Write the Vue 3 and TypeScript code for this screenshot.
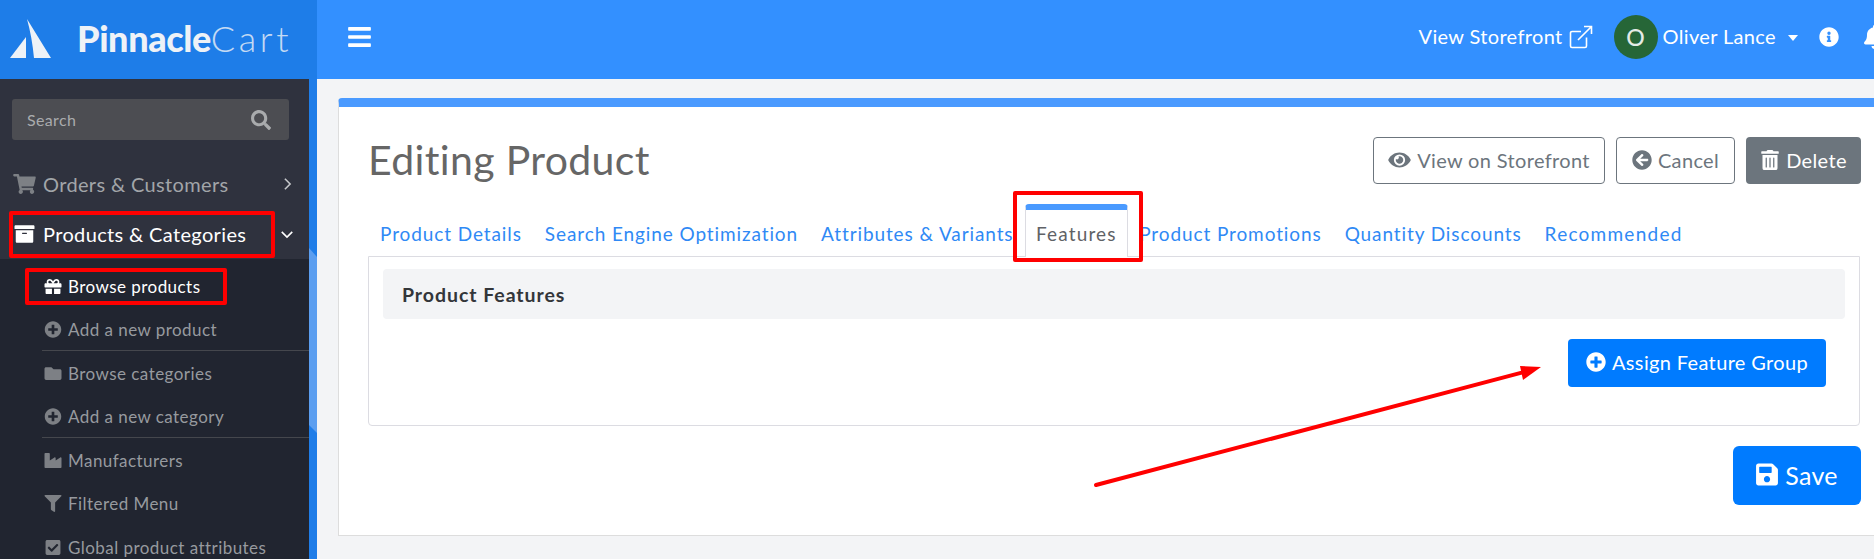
<script setup lang="ts">
interface Icon { w: number; d: string }

const icons: Record<string, Icon> = {
  bars: { w: 448, d: 'M16 132h416c8.837 0 16-7.163 16-16V76c0-8.837-7.163-16-16-16H16C7.163 60 0 67.163 0 76v40c0 8.837 7.163 16 16 16zm0 160h416c8.837 0 16-7.163 16-16v-40c0-8.837-7.163-16-16-16H16c-8.837 0-16 7.163-16 16v40c0 8.837 7.163 16 16 16zm0 160h416c8.837 0 16-7.163 16-16v-40c0-8.837-7.163-16-16-16H16c-8.837 0-16 7.163-16 16v40c0 8.837 7.163 16 16 16z' },
  search: { w: 512, d: 'M505 442.7L405.3 343c-4.5-4.5-10.6-7-17-7H372c27.6-35.3 44-79.7 44-128C416 93.1 322.9 0 208 0S0 93.1 0 208s93.1 208 208 208c48.3 0 92.7-16.4 128-44v16.3c0 6.4 2.5 12.5 7 17l99.7 99.7c9.4 9.4 24.6 9.4 33.9 0l28.3-28.3c9.4-9.4 9.4-24.6.1-34zM208 336c-70.7 0-128-57.2-128-128 0-70.7 57.2-128 128-128 70.7 0 128 57.2 128 128 0 70.7-57.2 128-128 128z' },
  cart: { w: 576, d: 'M528.12 301.319l47.273-208C578.806 78.301 567.391 64 551.99 64H159.208l-9.166-44.81C147.758 8.021 137.93 0 126.529 0H24C10.745 0 0 10.745 0 24v16c0 13.255 10.745 24 24 24h69.883l70.248 343.435C147.325 417.1 136 435.222 136 456c0 30.928 25.072 56 56 56s56-25.072 56-56c0-15.674-6.447-29.835-16.824-40h209.647C430.447 426.165 424 440.326 424 456c0 30.928 25.072 56 56 56s56-25.072 56-56c0-22.172-12.888-41.332-31.579-50.405l5.517-24.276c3.413-15.018-8.002-29.319-23.403-29.319H218.117l-6.545-32h293.145c11.206 0 20.92-7.754 23.403-18.681z' },
  archive: { w: 512, d: 'M32 448c0 17.7 14.3 32 32 32h384c17.7 0 32-14.3 32-32V160H32v288zm160-212c0-6.6 5.4-12 12-12h104c6.6 0 12 5.4 12 12v8c0 6.6-5.4 12-12 12H204c-6.6 0-12-5.4-12-12v-8zM480 32H32C14.3 32 0 46.3 0 64v48c0 8.8 7.2 16 16 16h480c8.8 0 16-7.2 16-16V64c0-17.7-14.3-32-32-32z' },
  gift: { w: 512, d: 'M32 448c0 17.7 14.3 32 32 32h160V320H32v128zm256 32h160c17.7 0 32-14.3 32-32V320H288v160zm192-320h-42.1c6.2-12.1 10.1-25.5 10.1-40 0-48.5-39.5-88-88-88-41.6 0-68.5 21.3-103 68.3-34.5-47-61.4-68.3-103-68.3-48.5 0-88 39.5-88 88 0 14.5 3.8 27.9 10.1 40H32c-17.7 0-32 14.3-32 32v80c0 8.8 7.2 16 16 16h480c8.8 0 16-7.2 16-16v-80c0-17.7-14.3-32-32-32zm-326.1 0c-22.1 0-40-17.9-40-40s17.9-40 40-40c19.9 0 34.6 3.3 86.1 80h-86.1zm206.1 0h-86.1c51.4-76.5 65.7-80 86.1-80 22.1 0 40 17.9 40 40s-17.9 40-40 40z' },
  plus: { w: 512, d: 'M256 8C119 8 8 119 8 256s111 248 248 248 248-111 248-248S393 8 256 8zm144 276c0 6.6-5.4 12-12 12h-92v92c0 6.6-5.4 12-12 12h-56c-6.6 0-12-5.4-12-12v-92h-92c-6.6 0-12-5.4-12-12v-56c0-6.6 5.4-12 12-12h92v-92c0-6.6 5.4-12 12-12h56c6.6 0 12 5.4 12 12v92h92c6.6 0 12 5.4 12 12v56z' },
  folder: { w: 512, d: 'M464 128H272l-64-64H48C21.49 64 0 85.49 0 112v288c0 26.51 21.49 48 48 48h416c26.51 0 48-21.49 48-48V176c0-26.51-21.49-48-48-48z' },
  industry: { w: 512, d: 'M475.115 163.781L336 252.309v-68.28c0-18.916-20.931-30.399-36.885-20.248L160 252.309V56c0-13.255-10.745-24-24-24H24C10.745 32 0 42.745 0 56v400c0 13.255 10.745 24 24 24h464c13.255 0 24-10.745 24-24V184.029c0-18.917-20.931-30.399-36.885-20.248z' },
  filter: { w: 512, d: 'M487.976 0H24.028C2.71 0-8.047 25.866 7.058 40.971L192 225.941V432c0 7.831 3.821 15.17 10.237 19.662l80 55.98C298.02 518.69 320 507.493 320 487.98V225.941l184.947-184.97C520.021 25.896 509.338 0 487.976 0z' },
  check: { w: 448, d: 'M400 480H48c-26.51 0-48-21.49-48-48V80c0-26.51 21.49-48 48-48h352c26.51 0 48 21.49 48 48v352c0 26.51-21.49 48-48 48zm-204.686-98.059l184-184c6.248-6.248 6.248-16.379 0-22.627l-22.627-22.627c-6.248-6.248-16.379-6.249-22.628 0L184 302.745l-70.059-70.059c-6.248-6.248-16.379-6.248-22.628 0l-22.627 22.627c-6.248 6.248-6.248 16.379 0 22.627l104 104c6.249 6.25 16.379 6.25 22.628.001z' },
  eye: { w: 576, d: 'M572.52 241.4C518.29 135.59 410.93 64 288 64S57.68 135.64 3.48 241.41a32.35 32.35 0 0 0 0 29.19C57.71 376.41 165.07 448 288 448s230.32-71.64 284.52-177.41a32.35 32.35 0 0 0 0-29.19zM288 400a144 144 0 1 1 144-144 143.93 143.93 0 0 1-144 144zm0-240a95.31 95.31 0 0 0-25.31 3.79 47.85 47.85 0 0 1-66.9 66.9A95.78 95.78 0 1 0 288 160z' },
  back: { w: 512, d: 'M256 504C119 504 8 393 8 256S119 8 256 8s248 111 248 248-111 248-248 248zm28.9-143.6L209.4 288H392c13.3 0 24-10.7 24-24v-16c0-13.3-10.7-24-24-24H209.4l75.5-72.4c9.7-9.3 9.9-24.8.4-34.3l-11-10.9c-9.4-9.4-24.6-9.4-33.9 0L107.7 239c-9.4 9.4-9.4 24.6 0 33.9l132.7 132.7c9.4 9.4 24.6 9.4 33.9 0l11-10.9c9.5-9.5 9.3-25-.4-34.3z' },
  trash: { w: 448, d: 'M32 464a48 48 0 0 0 48 48h288a48 48 0 0 0 48-48V128H32zm272-256a16 16 0 0 1 32 0v224a16 16 0 0 1-32 0zm-96 0a16 16 0 0 1 32 0v224a16 16 0 0 1-32 0zm-96 0a16 16 0 0 1 32 0v224a16 16 0 0 1-32 0zM432 32H312l-9.4-18.7A24 24 0 0 0 281.1 0H166.8a23.72 23.72 0 0 0-21.4 13.3L136 32H16A16 16 0 0 0 0 48v32a16 16 0 0 0 16 16h416a16 16 0 0 0 16-16V48a16 16 0 0 0-16-16z' },
  info: { w: 512, d: 'M256 8C119.043 8 8 119.083 8 256c0 136.997 111.043 248 248 248s248-111.003 248-248C504 119.083 392.957 8 256 8zm0 110c23.196 0 42 18.804 42 42s-18.804 42-42 42-42-18.804-42-42 18.804-42 42-42zm56 254c0 6.627-5.373 12-12 12h-88c-6.627 0-12-5.373-12-12v-24c0-6.627 5.373-12 12-12h12v-64h-12c-6.627 0-12-5.373-12-12v-24c0-6.627 5.373-12 12-12h64c6.627 0 12 5.373 12 12v100h12c6.627 0 12 5.373 12 12v24z' },
  bell: { w: 448, d: 'M224 512c35.32 0 63.97-28.65 63.97-64H160.03c0 35.35 28.65 64 63.97 64zm215.39-149.71c-19.32-20.76-55.47-51.99-55.47-154.29 0-77.7-54.48-139.9-127.94-155.16V32c0-17.67-14.32-32-31.98-32s-31.98 14.33-31.98 32v20.84C118.56 68.1 64.08 130.3 64.08 208c0 102.3-36.15 133.53-55.47 154.29-6 6.45-8.66 14.16-8.61 21.71.11 16.4 12.98 32 32.1 32h383.8c19.12 0 32-15.6 32.1-32 .05-7.55-2.61-15.27-8.61-21.71z' },
  save: { w: 448, d: 'M433.941 129.941l-83.882-83.882A48 48 0 0 0 316.118 32H48C21.49 32 0 53.49 0 80v352c0 26.51 21.49 48 48 48h352c26.51 0 48-21.49 48-48V163.882a48 48 0 0 0-14.059-33.941zM224 416c-35.346 0-64-28.654-64-64 0-35.346 28.654-64 64-64s64 28.654 64 64c0 35.346-28.654 64-64 64zm96-304.52V212c0 6.627-5.373 12-12 12H76c-6.627 0-12-5.373-12-12V108c0-6.627 5.373-12 12-12h228.52c3.183 0 6.235 1.264 8.485 3.515l3.48 3.48A11.996 11.996 0 0 1 320 111.48z' },
}

const vb = (name: string) => `0 0 ${icons[name].w} 512`

const subItems = [
  { label: 'Browse products', icon: 'gift', active: true, divider: false },
  { label: 'Add a new product', icon: 'plus', active: false, divider: true },
  { label: 'Browse categories', icon: 'folder', active: false, divider: false },
  { label: 'Add a new category', icon: 'plus', active: false, divider: true },
  { label: 'Manufacturers', icon: 'industry', active: false, divider: false },
  { label: 'Filtered Menu', icon: 'filter', active: false, divider: false },
  { label: 'Global product attributes', icon: 'check', active: false, divider: false },
]

const tabs = [
  { label: 'Product Details', active: false },
  { label: 'Search Engine Optimization', active: false },
  { label: 'Attributes & Variants', active: false },
  { label: 'Features', active: true },
  { label: 'Product Promotions', active: false },
  { label: 'Quantity Discounts', active: false },
  { label: 'Recommended', active: false },
]
</script>

<template>
  <div class="page">
    <div class="brand">
      <svg class="brand-mark" viewBox="0 0 42 40">
        <polygon points="0,39 16,39 16,18" />
        <path d="M17 0 L41 39 L24 39 Q22 18 17 0 Z" />
      </svg>
      <span class="brand-name"><b>Pinnacle</b><i>Cart</i></span>
    </div>

    <header class="topbar">
      <svg class="burger" :viewBox="vb('bars')"><path :d="icons.bars.d" /></svg>
      <div class="top-right">
        <span class="store-link">View Storefront</span>
        <svg class="ext" viewBox="0 0 24 24" fill="none" stroke="#fff" stroke-width="1.6">
          <path d="M17.5 12.5 V21 a1.5 1.5 0 0 1 -1.5 1.5 H3 a1.5 1.5 0 0 1 -1.5 -1.5 V8 a1.5 1.5 0 0 1 1.5 -1.5 H12" />
          <path d="M9 15 L22.5 1.5 M15 1.5 H22.5 V9" />
        </svg>
        <span class="avatar">O</span>
        <span class="user">Oliver Lance</span>
        <span class="caret"></span>
        <svg class="info" :viewBox="vb('info')"><path :d="icons.info.d" /></svg>
        <svg class="bell" :viewBox="vb('bell')"><path :d="icons.bell.d" /></svg>
      </div>
    </header>

    <aside class="side">
      <nav class="side-nav">
        <div class="search">
          <span>Search</span>
          <svg :viewBox="vb('search')"><path :d="icons.search.d" /></svg>
        </div>
        <div class="nav-row">
          <svg class="nav-icon" :viewBox="vb('cart')"><path :d="icons.cart.d" /></svg>
          <span>Orders &amp; Customers</span>
          <svg class="chev" viewBox="0 0 10 16" fill="none"><path d="M2 2 L8 8 L2 14" /></svg>
        </div>
        <div class="nav-row open">
          <svg class="nav-icon" :viewBox="vb('archive')"><path :d="icons.archive.d" /></svg>
          <span>Products &amp; Categories</span>
          <svg class="chev down" viewBox="0 0 16 10" fill="none"><path d="M2 2 L8 8 L14 2" /></svg>
        </div>
        <ul class="sub">
          <li
            v-for="item in subItems"
            :key="item.label"
            :class="{ active: item.active, divider: item.divider }"
          >
            <svg :viewBox="vb(item.icon)"><path :d="icons[item.icon].d" /></svg>
            <span>{{ item.label }}</span>
          </li>
        </ul>
      </nav>
      <div class="strip"><div class="strip-light"></div></div>
    </aside>

    <main class="main">
      <section class="card">
        <div class="head">
          <h1>Editing Product</h1>
          <div class="actions">
            <button class="btn outline">
              <svg :viewBox="vb('eye')"><path :d="icons.eye.d" /></svg>View on Storefront
            </button>
            <button class="btn outline">
              <svg :viewBox="vb('back')"><path :d="icons.back.d" /></svg>Cancel
            </button>
            <button class="btn grey">
              <svg :viewBox="vb('trash')"><path :d="icons.trash.d" /></svg>Delete
            </button>
          </div>
        </div>

        <div class="tabs">
          <a v-for="tab in tabs" :key="tab.label" :class="{ active: tab.active }">{{ tab.label }}</a>
        </div>

        <div class="panel">
          <div class="panel-head">Product Features</div>
          <div class="panel-body">
            <button class="btn primary">
              <svg :viewBox="vb('plus')"><path :d="icons.plus.d" /></svg>Assign Feature Group
            </button>
          </div>
        </div>

        <div class="foot">
          <button class="btn primary big">
            <svg :viewBox="vb('save')"><path :d="icons.save.d" /></svg>Save
          </button>
        </div>
      </section>
    </main>

    <!-- red annotations drawn on top of the screenshot -->
    <div class="mark mark-products"></div>
    <div class="mark mark-browse"></div>
    <div class="mark mark-features"></div>
    <svg class="arrow" viewBox="0 0 1874 559">
      <line x1="1096" y1="485" x2="1528" y2="371" stroke="#f00" stroke-width="4" stroke-linecap="round" />
      <polygon points="1541,367 1520,366 1523,380" fill="#f00" />
    </svg>
  </div>
</template>

<style>
html,
body {
  margin: 0;
  background: #f3f4f6;
}
</style>

<style scoped>
.page {
  position: relative;
  display: grid;
  grid-template-columns: 317px 1fr;
  grid-template-rows: 79px 480px;
  width: 1874px;
  height: 559px;
  overflow: hidden;
  font-family: Lato, "Liberation Sans", sans-serif;
  letter-spacing: 0.35px;
}

svg {
  display: block;
  fill: currentColor;
  flex: none;
}

.brand {
  display: flex;
  align-items: center;
  background: #1e7de8;
  color: #eef2f7;
}

.brand-mark {
  width: 42px;
  height: 40px;
  margin: -1px 0 0 10px;
  fill: #eef2f7;
}

.brand-name {
  margin: -4px 0 0 25px;
  font-size: 36px;
  letter-spacing: 0;
  line-height: 1;
}

.brand-name b {
  font-weight: 900;
  letter-spacing: -0.4px;
}

.brand-name i {
  font-style: normal;
  font-weight: 300;
  letter-spacing: 3.6px;
  opacity: 0.8;
}

.topbar {
  display: flex;
  align-items: center;
  box-sizing: border-box;
  background: #3390ff;
  color: #fff;
  padding: 0 0 5px 31px;
}

.burger {
  width: 23px;
  height: 26px;
}

.top-right {
  display: flex;
  align-items: center;
  margin-left: auto;
  margin-right: -11px;
  font-size: 20px;
}

.store-link,
.user {
  margin-top: -2px;
}

.ext {
  width: 24px;
  height: 24px;
  margin: 0 21px 0 6px;
  fill: none;
}

.avatar {
  display: flex;
  align-items: center;
  justify-content: center;
  width: 44px;
  height: 44px;
  border-radius: 50%;
  background: #266637;
  color: #e4ebe6;
  font-size: 23px;
  font-weight: 500;
  margin-right: 5px;
}

.caret {
  width: 0;
  height: 0;
  margin: 2px 21px 0 12px;
  border-left: 5.5px solid transparent;
  border-right: 5.5px solid transparent;
  border-top: 6px solid #fff;
}

.info {
  width: 20px;
  height: 20px;
  margin-right: 25px;
}

.bell {
  width: 21px;
  height: 24px;
}

.side {
  display: flex;
  height: 480px;
  overflow: hidden;
}

.side-nav {
  width: 309px;
  background: #2f323e;
}

.search {
  display: flex;
  align-items: center;
  justify-content: space-between;
  height: 41px;
  margin: 20px 20px 19px 12px;
  padding: 0 18px 0 15px;
  border-radius: 3px;
  background: #4c4d52;
  color: #a9abad;
  font-size: 16px;
}

.search svg {
  width: 20px;
  height: 20px;
}

.nav-row {
  display: flex;
  align-items: center;
  height: 50px;
  padding-left: 13px;
  color: #a2a5a9;
  font-size: 20px;
}

.nav-row.open {
  color: #fff;
}

.nav-icon {
  width: 23px;
  height: 20px;
  margin-right: 7px;
  color: #7d8085;
}

.open .nav-icon {
  color: #fff;
}

.chev {
  width: 9px;
  height: 14px;
  margin-left: auto;
  margin-right: 17px;
  stroke: #c6c8cb;
  stroke-width: 1.8;
  fill: none;
}

.chev.down {
  width: 14px;
  height: 9px;
  margin-right: 15px;
  stroke: #fff;
}

.sub {
  list-style: none;
  margin: 0;
  padding: 5px 0 0 42px;
  background: #212530;
  height: 320px;
}

.sub li {
  display: flex;
  align-items: center;
  box-sizing: border-box;
  height: 43.4px;
  padding: 2px 0 0 2px;
  color: #979a9f;
  font-size: 17px;
  letter-spacing: 0.45px;
}

.sub li svg {
  width: 18px;
  height: 17px;
  margin-right: 6px;
  color: #7d8085;
}

.sub li.active,
.sub li.active svg {
  color: #fff;
}

.sub li.divider {
  border-bottom: 1px solid #45474d;
}

.strip {
  position: relative;
  flex: 1;
  background: #1f7de8;
}

.strip-light {
  height: 100%;
  background: #5b9ef0;
  clip-path: polygon(0 169px, 100% 178px, 100% 354px, 0 346px);
}

.main {
  padding: 19px 0 0 21px;
  background: #f3f4f6;
  min-width: 0;
}

.card {
  box-sizing: border-box;
  background: #fff;
  border-top: 9px solid #4a9aff;
  border-left: 1px solid #ddd;
  border-bottom: 1px solid #ddd;
  border-top-left-radius: 4px;
  padding: 30px 13px 30px 29px;
}

.head {
  display: flex;
  align-items: center;
  justify-content: space-between;
  height: 47px;
}

h1 {
  margin: -2px 0 0;
  color: #666;
  font-size: 41px;
  font-weight: 400;
  letter-spacing: 0.35px;
}

.actions {
  display: flex;
  gap: 11px;
}

.btn {
  display: inline-flex;
  align-items: center;
  justify-content: center;
  height: 47px;
  padding: 0 0 2px;
  border: 1px solid transparent;
  border-radius: 4px;
  font-family: inherit;
  font-size: 20px;
  letter-spacing: 0.35px;
}

.btn svg {
  width: 20px;
  height: 20px;
  margin-right: 6px;
}

.btn.outline {
  background: #fff;
  border-color: #6c757d;
  color: #6c757d;
}

.actions .btn:nth-child(1) {
  width: 232px;
}

.actions .btn:nth-child(1) svg {
  width: 23px;
}

.actions .btn:nth-child(2) {
  width: 119px;
}

.btn.grey {
  width: 115px;
  background: #6c757d;
  color: #fff;
}

.tabs {
  display: flex;
  height: 52px;
  margin-top: 20px;
}

.tabs a {
  display: flex;
  align-items: center;
  box-sizing: border-box;
  padding: 6px 11.5px 0;
  color: #2f89f5;
  font-size: 19px;
  letter-spacing: 0.9px;
}

.tabs a:first-child {
  padding-left: 12px;
}

.tabs a:last-child {
  letter-spacing: 1.25px;
}

.tabs a.active {
  position: relative;
  z-index: 1;
  margin: 0 0 -1px;
  padding: 0 10px;
  color: #5f6266;
  background: #fff;
  border-top: 6px solid #4a9aff;
  border-left: 1px solid #dcdce2;
  border-right: 1px solid #dcdce2;
  border-radius: 4px 4px 0 0;
  letter-spacing: 1.15px;
}

.panel {
  box-sizing: border-box;
  height: 170px;
  margin-right: 1px;
  padding: 12px 14px;
  border: 1px solid #dcdce2;
  border-radius: 0 0 4px 4px;
}

.panel-head {
  display: flex;
  align-items: center;
  height: 50px;
  padding-left: 19px;
  border-radius: 4px;
  background: #f3f4f6;
  color: #33363a;
  font-size: 19.5px;
  font-weight: 700;
  letter-spacing: 0.95px;
}

.panel-body {
  display: flex;
  justify-content: flex-end;
  padding: 20px 19px 0 0;
}

.btn.primary {
  background: #007bff;
  color: #fff;
  width: 258px;
  height: 48px;
}

.foot {
  display: flex;
  justify-content: flex-end;
  margin-top: 20px;
}

.btn.primary.big {
  width: 128px;
  height: 59px;
  border-radius: 6px;
  font-size: 25px;
}

.btn.big svg {
  width: 22px;
  height: 25px;
  margin-right: 7px;
}

.mark {
  position: absolute;
  z-index: 2;
  box-sizing: border-box;
  border: 4px solid #f00;
  border-radius: 2px;
  pointer-events: none;
}

.mark-products {
  left: 9px;
  top: 211px;
  width: 266px;
  height: 47px;
}

.mark-browse {
  left: 25px;
  top: 268px;
  width: 202px;
  height: 37px;
}

.mark-features {
  left: 1013px;
  top: 191px;
  width: 130px;
  height: 71px;
}

.arrow {
  position: absolute;
  z-index: 2;
  inset: 0;
  width: 1874px;
  height: 559px;
  fill: none;
  pointer-events: none;
}
</style>
